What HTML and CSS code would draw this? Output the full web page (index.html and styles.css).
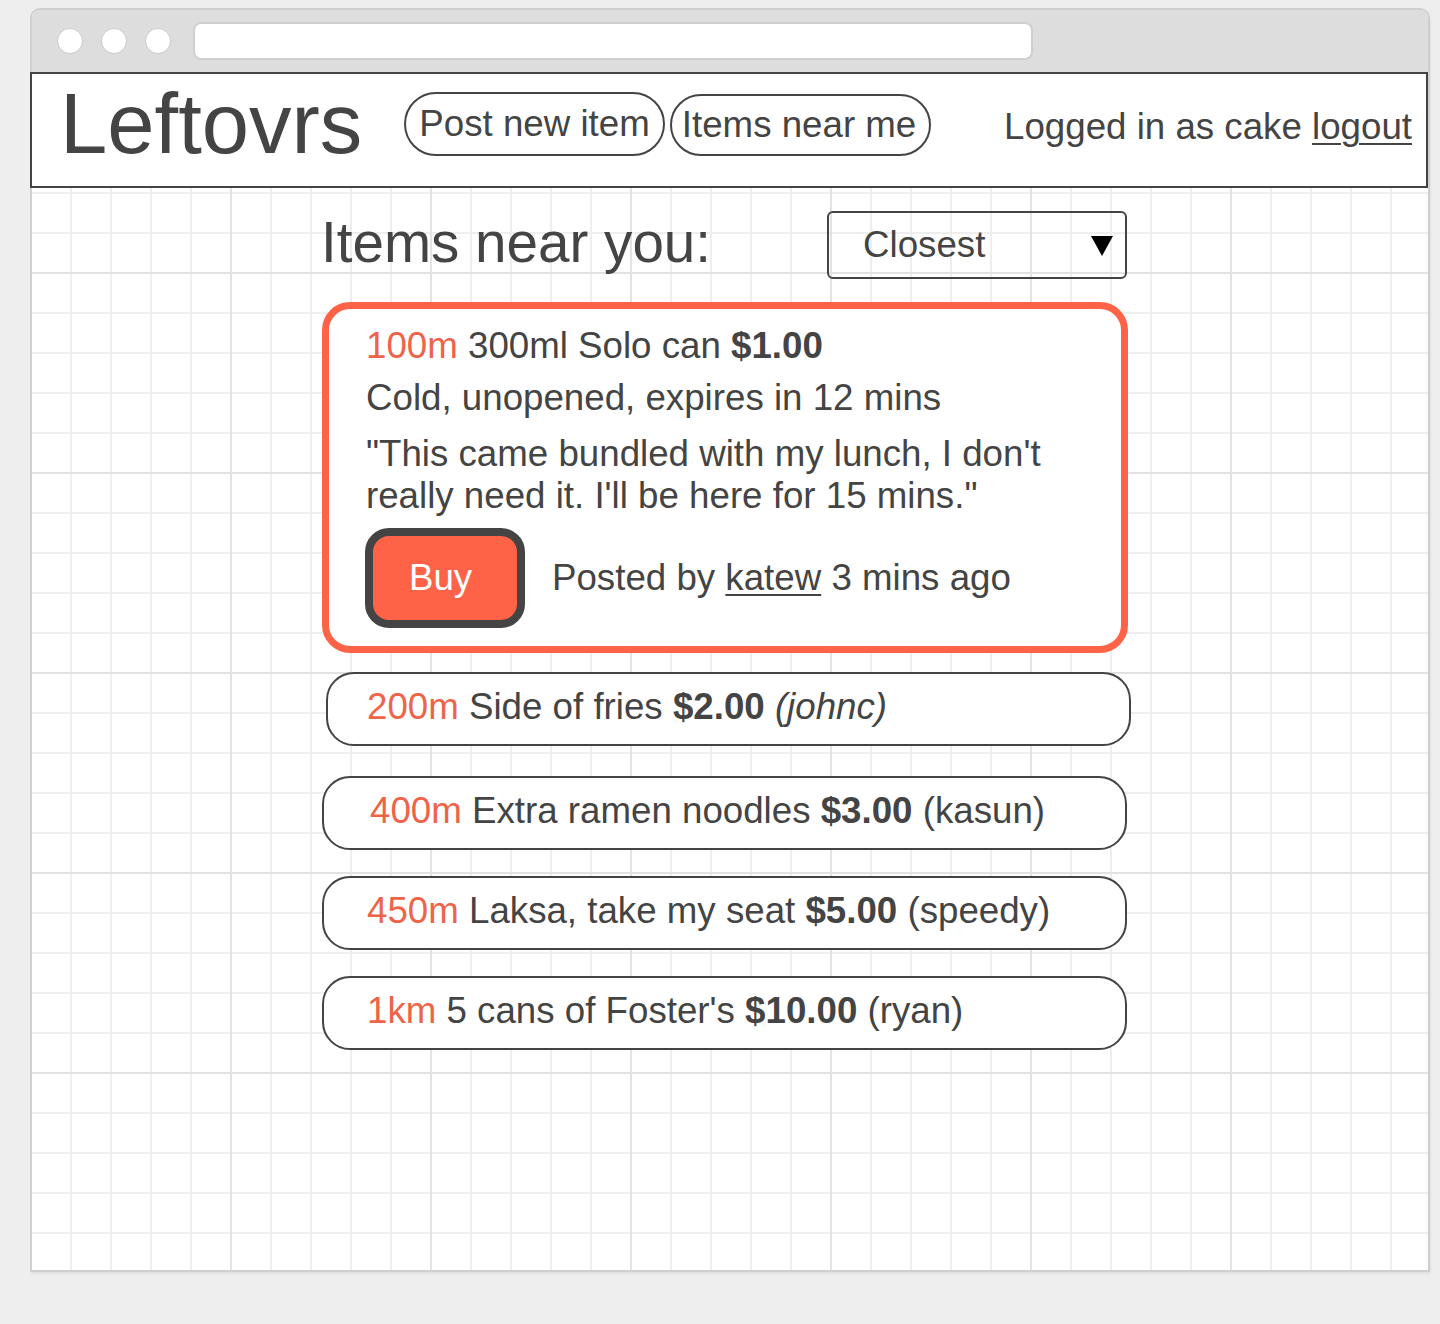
FILE: index.html
```html
<!DOCTYPE html>
<html lang="en">
<head>
<meta charset="utf-8">
<title>Leftovrs</title>
<link rel="stylesheet" href="styles.css">
</head>
<body>
<div class="window">
  <div class="titlebar">
    <span class="dot"></span>
    <span class="dot"></span>
    <span class="dot"></span>
    <div class="address"></div>
  </div>
  <div class="screen">
    <header class="appbar">
      <div class="logo">Leftovrs</div>
      <nav class="nav">
        <a class="pill pill-post" href="#">Post new item</a>
        <a class="pill pill-near" href="#">Items near me</a>
      </nav>
      <div class="session">Logged in as cake <a class="link" href="#">logout</a></div>
    </header>
    <main class="content">
      <div class="list-head">
        <h1 class="title">Items near you:</h1>
        <div class="sort">
          <span class="sort-label">Closest</span>
          <svg class="sort-arrow" width="22" height="20" viewBox="0 0 22 20"><polygon points="0,0 22,0 11,20" fill="#000"/></svg>
        </div>
      </div>
      <article class="card">
        <p class="card-line card-first"><span class="dist">100m</span> 300ml Solo can <b>$1.00</b></p>
        <p class="card-line card-second">Cold, unopened, expires in 12 mins</p>
        <p class="card-line card-quote">"This came bundled with my lunch, I don't really need it. I'll be here for 15 mins."</p>
        <div class="card-actions">
          <button class="buy" type="button">Buy</button>
          <span class="posted">Posted by <a class="link" href="#">katew</a> 3 mins ago</span>
        </div>
      </article>
      <ul class="items">
        <li class="item item-fries"><span class="dist">200m</span> Side of fries <b>$2.00</b> <i>(johnc)</i></li>
        <li class="item item-ramen"><span class="dist">400m</span> Extra ramen noodles <b>$3.00</b> (kasun)</li>
        <li class="item"><span class="dist">450m</span> Laksa, take my seat <b>$5.00</b> (speedy)</li>
        <li class="item"><span class="dist">1km</span> 5 cans of Foster's <b>$10.00</b> (ryan)</li>
      </ul>
    </main>
  </div>
</div>
</body>
</html>
```
FILE: styles.css
```css
* {
  box-sizing: border-box;
}

html, body {
  margin: 0;
  padding: 0;
}

body {
  background: #eeeeee;
  font-family: "Liberation Sans", Arial, sans-serif;
  color: #444444;
  width: 1440px;
  height: 1324px;
  overflow: hidden;
}

.window {
  margin: 8px 0 0 30px;
  width: 1400px;
  height: 1264px;
  border: 2px solid #cfcfcf;
  border-radius: 10px 10px 0 0;
  display: flex;
  flex-direction: column;
  box-shadow: 1px 2px 2px rgba(0, 0, 0, 0.05);
  background: #fff;
}

.titlebar {
  height: 62px;
  flex: none;
  background: #dddddd;
  border-radius: 8px 8px 0 0;
  display: flex;
  align-items: center;
  padding-left: 25px;
  gap: 18px;
}

.dot {
  width: 26px;
  height: 26px;
  border-radius: 50%;
  background: #fff;
  border: 1px solid #cccccc;
  flex: none;
}

.address {
  margin-left: 4px;
  width: 840px;
  height: 38px;
  background: #fff;
  border: 2px solid #cfcfcf;
  border-radius: 8px;
}

.screen {
  flex: 1;
  background-color: #ffffff;
  background-image:
    linear-gradient(to right, #e2e2e2 2px, transparent 2px),
    linear-gradient(to bottom, #e2e2e2 2px, transparent 2px),
    linear-gradient(to right, #eeeeee 2px, transparent 2px),
    linear-gradient(to bottom, #eeeeee 2px, transparent 2px);
  background-size: 200px 200px, 200px 200px, 40px 40px, 40px 40px;
  background-position: 198px 0, 198px 0, 38px 0, 38px 0;
}

.appbar {
  margin-left: -2px;
  width: 1398px;
  height: 116px;
  border: 2px solid #444444;
  background: #ffffff;
  display: flex;
  align-items: flex-start;
  padding: 0 14px 0 28px;
}

.logo {
  font-size: 85px;
  line-height: 84px;
  margin-top: 8px;
  white-space: nowrap;
}

.nav {
  display: flex;
  align-items: flex-end;
  gap: 5px;
  margin-left: 42px;
  margin-top: 18px;
}

.pill {
  display: block;
  border: 2px solid #444444;
  border-radius: 32px;
  font-size: 36.7px;
  line-height: 42px;
  color: #444444;
  text-decoration: none;
  white-space: nowrap;
}

.pill-post {
  padding: 9px 13px 9px 13px;
}

.pill-near {
  padding: 8px 13px 8px 10px;
}

.session {
  margin-left: auto;
  margin-top: 32px;
  font-size: 36.7px;
  line-height: 42px;
  white-space: nowrap;
}

.link {
  color: #444444;
  text-decoration: underline;
  text-decoration-thickness: 2px;
  text-underline-offset: 4px;
}

.content {
  padding-left: 290px;
  padding-top: 23px;
}

.list-head {
  width: 806px;
  display: flex;
  justify-content: space-between;
  align-items: flex-start;
}

.title {
  margin: 0 0 0 -1px;
  font-size: 56.6px;
  line-height: 64px;
  font-weight: normal;
}

.sort {
  width: 300px;
  height: 68px;
  margin-right: 1px;
  border: 2px solid #444444;
  border-radius: 6px;
  display: flex;
  align-items: center;
  justify-content: space-between;
  padding: 0 12px 0 34px;
  font-size: 36.7px;
  line-height: 42px;
}

.sort-arrow {
  display: block;
  margin-top: 2px;
}

.card {
  margin-top: 23px;
  width: 806px;
  border: 7px solid #ff6347;
  border-radius: 28px;
  background: #ffffff;
  padding: 16px 40px 18px 37px;
}

.card-line {
  margin: 0;
  font-size: 36.7px;
  line-height: 42px;
}

.card-first {
  margin-bottom: 10px;
}

.card-second {
  margin-bottom: 14px;
}

.card-quote {
  margin-bottom: 11px;
}

.dist {
  color: #ef6349;
}

.card-actions {
  display: flex;
  align-items: center;
  margin-left: -1px;
}

.buy {
  width: 160px;
  height: 100px;
  border: 8px solid #444444;
  border-radius: 24px;
  background: #ff6347;
  color: #ffffff;
  font-family: "Liberation Sans", Arial, sans-serif;
  font-size: 36.7px;
  line-height: 84px;
  padding: 0 0 0 36px;
  text-align: left;
  margin: 0;
}

.posted {
  margin-left: 27px;
  font-size: 36.7px;
  line-height: 42px;
}

.items {
  list-style: none;
  margin: 19px 0 0 0;
  padding: 0;
  display: flex;
  flex-direction: column;
  gap: 26px;
}

.item {
  width: 805px;
  height: 74px;
  border: 2px solid #444444;
  border-radius: 28px;
  background: #ffffff;
  font-size: 36.7px;
  line-height: 42px;
  padding: 12px 20px 16px 43px;
  white-space: nowrap;
}

.item-fries {
  margin-left: 4px;
  margin-bottom: 4px;
  padding-left: 39px;
}

.item-ramen {
  padding-left: 46px;
}
```
